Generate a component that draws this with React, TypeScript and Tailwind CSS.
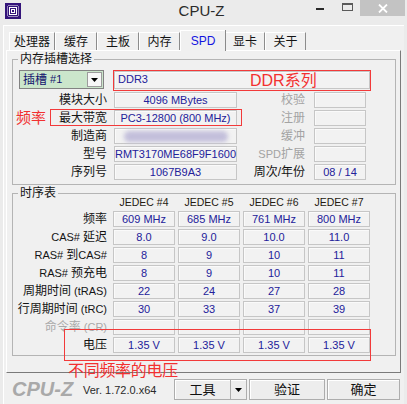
import React from "react";
import clsx from "clsx";

const tabs = [
  { name: "处理器", w: "w-[46px]" },
  { name: "缓存", w: "w-[42px]" },
  { name: "主板", w: "w-[42px]" },
  { name: "内存", w: "w-[41px]" },
  { name: "SPD", w: "w-[45px]", active: true },
  { name: "显卡", w: "w-[40px]" },
  { name: "关于", w: "w-[41px]" },
];

const Lat = ({ children }: { children: React.ReactNode }) => (
  <span className="text-[11px]">{children}</span>
);

const spdRows: {
  label: React.ReactNode;
  value: React.ReactNode;
  side: React.ReactNode;
  sideOn?: boolean;
  sideValue?: string;
}[] = [
  { label: "模块大小", value: "4096 MBytes", side: "校验" },
  { label: "最大带宽", value: "PC3-12800 (800 MHz)", side: "注册" },
  {
    label: "制造商",
    value: <div className="h-[11px] w-[104px] rounded-full bg-[#c3bfdb] blur-[2px]" />,
    side: "缓冲",
  },
  { label: "型号", value: "RMT3170ME68F9F1600", side: <><Lat>SPD</Lat>扩展</> },
  { label: "序列号", value: "1067B9A3", side: "周次/年份", sideOn: true, sideValue: "08 / 14" },
];

const timings: { label: React.ReactNode; values: string[]; off?: boolean }[] = [
  { label: "频率", values: ["609 MHz", "685 MHz", "761 MHz", "800 MHz"] },
  { label: <><Lat>CAS# </Lat>延迟</>, values: ["8.0", "9.0", "10.0", "11.0"] },
  { label: <><Lat>RAS# </Lat>到<Lat>CAS#</Lat></>, values: ["8", "9", "10", "11"] },
  { label: <><Lat>RAS# </Lat>预充电</>, values: ["8", "9", "10", "11"] },
  { label: <>周期时间<Lat> (tRAS)</Lat></>, values: ["22", "24", "27", "28"] },
  { label: <>行周期时间<Lat> (tRC)</Lat></>, values: ["30", "33", "37", "39"] },
  { label: <>命令率<Lat> (CR)</Lat></>, values: ["", "", "", ""], off: true },
  { label: "电压", values: ["1.35 V", "1.35 V", "1.35 V", "1.35 V"] },
];

const Field = ({
  children,
  className,
}: {
  children?: React.ReactNode;
  className?: string;
}) => (
  <div
    className={clsx(
      "flex h-[16px] shrink-0 items-center justify-center border border-[#c6c6c6] bg-[#f2f2f2] text-[11px] leading-none text-[#23219a] shadow-[inset_1px_1px_0_#fafafa]",
      className,
    )}
  >
    {children}
  </div>
);

const Button = ({ children, className }: { children: React.ReactNode; className?: string }) => (
  <div
    className={clsx(
      "flex h-[21px] items-center justify-center border border-[#adadad] bg-[#ededed] text-[13px] leading-none text-[#111] shadow-[inset_1px_1px_0_#fff]",
      className,
    )}
  >
    {children}
  </div>
);

export default function App() {
  return (
    <div className="relative h-[404px] w-[407px] overflow-hidden bg-[#ebebeb] font-['Liberation_Sans','Noto_Sans_CJK_SC',sans-serif] text-[#141414]">
      {/* title bar */}
      <div className="flex h-[25px] items-start">
        <div className="w-[100px]">
          <svg className="ml-[5px] mt-[3px]" width="16" height="16" viewBox="0 0 16 16">
            <rect width="16" height="16" fill="#34147a" />
            {[4, 6, 8, 10, 12].map((p) => (
              <g key={p} fill="#fff">
                <rect x={p - 0.5} y="2" width="1" height="1" />
                <rect x={p - 0.5} y="13" width="1" height="1" />
                <rect x="2" y={p - 0.5} width="1" height="1" />
                <rect x="13" y={p - 0.5} width="1" height="1" />
              </g>
            ))}
            <rect x="4.5" y="4.5" width="7" height="7" fill="none" stroke="#fff" strokeWidth="1" />
            <rect x="6.5" y="6.5" width="3" height="3" fill="none" stroke="#fff" strokeWidth="1" />
          </svg>
        </div>
        <div className="w-[203px] text-center text-[15px] leading-[22px] text-[#2a2a2a]">CPU-Z</div>
        <div className="flex items-start">
          <div className="ml-[13px] mt-[8px] h-[2px] w-[8px] bg-[#2a2a2a]" />
          <div className="ml-[18px] mt-[3px] h-[8px] w-[11px] border border-t-2 border-[#5a5a5a]" />
          <div className="ml-[7px] flex h-[16px] w-[45px] items-center justify-center bg-[#c3c3c3]">
            <svg width="10" height="9" viewBox="0 0 10 9">
              <path d="M1 0.5 L9 8.5 M9 0.5 L1 8.5" stroke="#fff" strokeWidth="1.8" />
            </svg>
          </div>
        </div>
      </div>

      {/* body */}
      <div className="mx-[3px] h-[379px] border-l border-t border-white bg-[#f0f0f0]">
        {/* tabs */}
        <div className="flex h-[24px] items-end pl-[5px] pt-[4px]">
          {tabs.map((t) =>
            t.active ? (
              <div
                key={t.name}
                className={clsx(
                  "relative z-10 -mb-px flex h-[21px] items-center justify-center border-l border-t border-white bg-[#f0f0f0] text-[12px] leading-none text-[#1414e0] shadow-[1px_0_0_#8a8a8a]",
                  t.w,
                )}
              >
                {t.name}
              </div>
            ) : (
              <div
                key={t.name}
                className={clsx(
                  "flex h-[18px] items-center justify-center border-l border-t border-r border-white border-r-[#8c8c8c] bg-[#f0f0f0] text-[12px] leading-none",
                  t.w,
                )}
              >
                {t.name}
              </div>
            ),
          )}
        </div>

        {/* tab panel */}
        <div className="ml-[2px] h-[323px] w-[395px] border border-white border-b-[#7a7a7a] border-r-[#7a7a7a] pl-[5px] pt-[3px]">
          <fieldset className="w-[384px] border border-[#b4b4b4]">
            <legend className="ml-[5px] px-[2px] text-[12px] leading-[10px]">内存插槽选择</legend>
            <div className="mt-[6px] flex items-center">
              <div className="ml-[6px] flex h-[19px] w-[85px] items-center border border-[#828282] bg-[#cbe6cb] pl-[3px] text-[12px] leading-none text-[#14146e]">
                插槽 <Lat>&nbsp;#1</Lat>
                <div className="ml-auto mr-px flex h-[15px] w-[15px] items-center justify-center border border-[#9c9c9c] bg-[#f7f7f7]">
                  <svg width="7" height="4" viewBox="0 0 7 4">
                    <path d="M0 0 H7 L3.5 4 Z" fill="#000" />
                  </svg>
                </div>
              </div>
              <Field className="ml-[10px] h-[18px] w-[256px] !justify-start pl-[3px]">DDR3</Field>
            </div>
            <div className="mt-[3px] flex flex-col gap-[2px] pb-[4px]">
              {spdRows.map((r, i) => (
                <div key={i} className="flex h-[16px] items-center">
                  <div className="w-[94px] text-right text-[12px] leading-none">{r.label}</div>
                  <Field className="ml-[7px] w-[123px]">{r.value}</Field>
                  <div
                    className={clsx(
                      "w-[68px] text-right text-[12px] leading-none",
                      r.sideOn ? "text-[#141414]" : "text-[#a3a3a3]",
                    )}
                  >
                    {r.side}
                  </div>
                  <Field className="ml-[9px] w-[52px]">{r.sideValue}</Field>
                </div>
              ))}
            </div>
          </fieldset>

          <fieldset className="mt-[3px] w-[384px] border border-[#b4b4b4]">
            <legend className="ml-[5px] px-[2px] text-[12px] leading-[10px]">时序表</legend>
            <div className="-mt-[3px] flex h-[14px] items-center">
              <div className="w-[100px]" />
              <div className="flex gap-[3px]">
                {["JEDEC #4", "JEDEC #5", "JEDEC #6", "JEDEC #7"].map((h) => (
                  <div key={h} className="w-[62px] text-center text-[10.5px] leading-none text-[#241a10]">
                    {h}
                  </div>
                ))}
              </div>
            </div>
            <div className="mt-[2px] flex flex-col gap-[2px] pb-[2px]">
              {timings.map((r, i) => (
                <div key={i} className="flex h-[16px] items-center">
                  <div
                    className={clsx(
                      "w-[94px] whitespace-nowrap text-right text-[12px] leading-none",
                      r.off && "text-[#a8a8a8]",
                    )}
                  >
                    {r.label}
                  </div>
                  <div className="ml-[6px] flex gap-[3px]">
                    {r.values.map((v, j) => (
                      <Field key={j} className="w-[62px]">
                        {v}
                      </Field>
                    ))}
                  </div>
                </div>
              ))}
            </div>
          </fieldset>
        </div>

        {/* bottom bar */}
        <div className="flex h-[31px] items-start">
          <div className="ml-[8px] mt-[6px] w-[71px] text-[20px] font-bold italic leading-[20px] text-[#a9a9a9]">
            CPU-Z
          </div>
          <div className="mt-[11px] w-[91px] text-[11px] leading-[12px] text-[#2a2a2a]">Ver. 1.72.0.x64</div>
          <Button className="mt-[6px] w-[73px] !justify-start">
            <span className="w-[56px] text-center">工具</span>
            <span className="flex h-full w-[16px] items-center justify-center border-l border-[#adadad]">
              <svg width="7" height="4" viewBox="0 0 7 4">
                <path d="M0 0 H7 L3.5 4 Z" fill="#000" />
              </svg>
            </span>
          </Button>
          <Button className="ml-[2px] mt-[6px] w-[76px]">验证</Button>
          <Button className="ml-[2px] mt-[6px] w-[73px]">确定</Button>
        </div>
      </div>

      {/* red annotations */}
      <div className="absolute left-[113px] top-[70px] h-[21px] w-[258px] border border-[#f23a3a]" />
      <div className="absolute left-[250px] top-[71px] text-[16px] leading-[20px] text-[#f23030]">
        DDR系列
      </div>
      <div className="absolute left-[50px] top-[109px] h-[17px] w-[192px] border border-[#f23a3a]" />
      <div className="absolute left-[16px] top-[108px] text-[15px] leading-[20px] text-[#f23030]">频率</div>
      <div className="absolute left-[64px] top-[329px] h-[32px] w-[307px] border border-[#f23a3a]" />
      <div className="absolute left-[68px] top-[361px] text-[16px] leading-[20px] tracking-[-0.3px] text-[#f23030]">
        不同频率的电压
      </div>
    </div>
  );
}
